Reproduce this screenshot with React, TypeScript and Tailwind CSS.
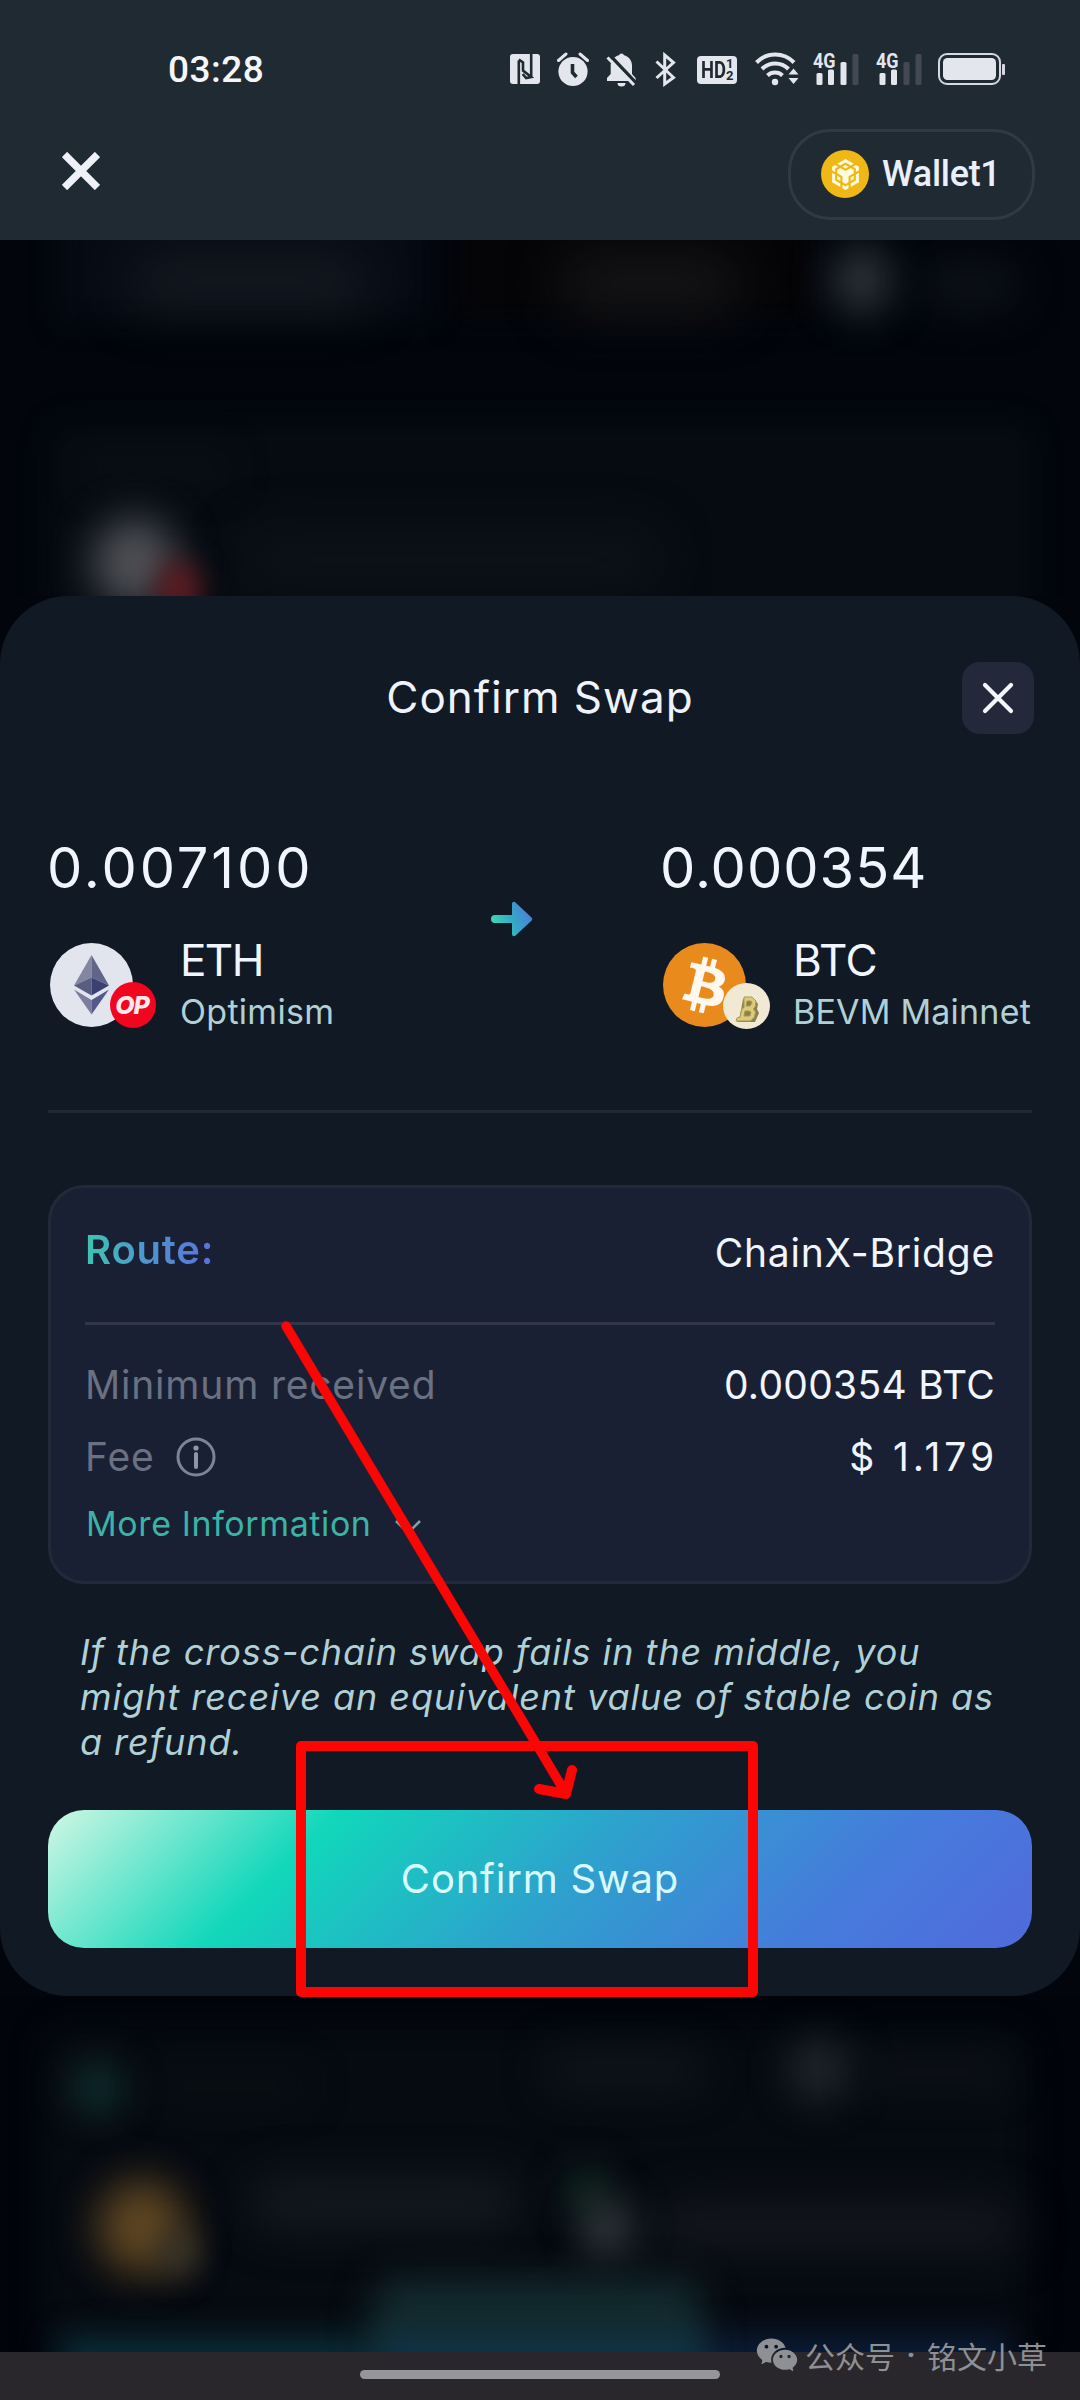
// App.tsx
import React from 'react';
import { RiWechatFill } from 'react-icons/ri';
import { SiBnbchain } from 'react-icons/si';

interface TokenSideProps {
  amount: string;
  symbol: string;
  network: string;
  icon: React.ReactNode;
  badge: React.ReactNode;
  amountClass: string;
  symbolClass: string;
  networkClass: string;
}

/* ---------- status bar ---------- */

const NfcIcon = () => (
  <svg width="30" height="36" viewBox="0 0 30 36">
    <rect y="2" width="30" height="30" rx="3" fill="#e4e6ee" />
    <path d="M8.800 32V8.500M21.200 2v22.500" fill="none" stroke="#202a32" strokeWidth="2.600" />
    <path d="M8.800 7.500 13 10.500v8l8.200 6.500-5 1-3.500-4" fill="none" stroke="#202a32" strokeWidth="2.600" />
  </svg>
);

const AlarmIcon = () => (
  <svg width="32" height="36" viewBox="0 0 32 36">
    <circle cx="16" cy="19.500" r="14.600" fill="#e4e6ee" />
    <path d="M1.500 8.500 9 2M30.500 8.500 23 2" stroke="#e4e6ee" strokeWidth="3" strokeLinecap="round" />
    <path d="M15.500 12v8.500l4 4.500" stroke="#202a32" strokeWidth="3.600" fill="none" />
  </svg>
);

const MutedBellIcon = () => (
  <svg width="31" height="36" viewBox="0 0 31 36">
    <path
      fill="#e4e6ee"
      d="M13 3.300a2.600 2.600 0 0 1 5 0c5 1.300 8 5.200 8 10.300v8.400l3.600 4v3H1v-3l3.700-4v-8.400c0-5 3.300-9 8.300-10.300ZM11.500 31h8a4 3.500 0 0 1-8 0Z"
    />
    <path d="M5 4.500 31 32" stroke="#202a32" strokeWidth="3.500" />
    <path d="M1.500 5.500 28 33" stroke="#e4e6ee" strokeWidth="3" />
  </svg>
);

const BluetoothIcon = () => (
  <svg width="21" height="36" viewBox="0 0 21 36" fill="none" stroke="#e4e6ee" strokeWidth="3">
    <path d="M1.500 9.500 18.500 25.500 9.700 32V3l8.800 7.500L1.500 26" />
  </svg>
);

const HdIcon = () => (
  <div className="flex h-7 w-10 items-center rounded bg-[#e4e6ee] pl-1 font-['Roboto',sans-serif] font-bold text-[#202a32]">
    <span className="w-[25px] origin-left scale-x-[0.8] text-[23px] leading-none">HD</span>
    <div className="-mt-px text-[13px] leading-[12px]">
      <div>1</div>
      <div>2</div>
    </div>
  </div>
);

const WifiIcon = () => (
  <svg width="44" height="36" viewBox="0 0 44 36" fill="none" stroke="#e4e6ee" strokeWidth="4">
    <path d="M1.500 10.500a26 26 0 0 1 37.500 0" />
    <path d="M7 17a18.500 18.500 0 0 1 26.500 0" />
    <path d="M12.500 23.500a11 11 0 0 1 15 0" />
    <circle cx="20" cy="30" r="3.200" fill="#e4e6ee" stroke="none" />
    <path d="m33.500 22.500 5-6 5 6ZM33.500 26l5 6 5-6Z" fill="#e4e6ee" stroke="none" />
  </svg>
);

const SignalIcon = ({ level }: { level: number }) => {
  const bars = [
    { x: 3.5, y: 21, h: 12 },
    { x: 15, y: 17.5, h: 15.5 },
    { x: 27.5, y: 10, h: 23 },
    { x: 39.5, y: 2, h: 31 },
  ];
  return (
    <svg width="46" height="36" viewBox="0 0 46 36" className="overflow-visible">
      {bars.map((bar, i) => (
        <rect key={bar.x} x={bar.x} y={bar.y} width="6" height={bar.h} rx="1.500" fill={i < level ? '#e4e6ee' : '#434853'} />
      ))}
      <text x="0" y="15.500" fontSize="21" fontWeight="700" textLength="22.500" lengthAdjust="spacingAndGlyphs" fill="#e4e6ee" className="font-['Roboto',sans-serif]">
        4G
      </text>
    </svg>
  );
};

const BatteryIcon = () => (
  <svg width="67" height="36" viewBox="0 0 67 36">
    <rect x="1" y="2" width="61" height="30" rx="8" fill="none" stroke="#d5d8e2" strokeWidth="2" />
    <rect x="5" y="6" width="53" height="22" rx="4.500" fill="#e4e6ee" />
    <rect x="64" y="12" width="3" height="11" rx="1" fill="#d5d8e2" />
  </svg>
);

const StatusBar = () => (
  <div className="flex h-[138px] items-center pl-[168px]">
    <span className="w-[342px] font-['Roboto',sans-serif] text-[37px] leading-none font-medium tracking-[0.5px] text-[#f4f6fa]">
      03:28
    </span>
    <div className="flex items-center pt-0.5">
      <NfcIcon />
      <div className="ml-[17px]"><AlarmIcon /></div>
      <div className="ml-[17px]"><MutedBellIcon /></div>
      <div className="ml-[18px]"><BluetoothIcon /></div>
      <div className="ml-[21px]"><HdIcon /></div>
      <div className="ml-[18px]"><WifiIcon /></div>
      <div className="ml-[14px]"><SignalIcon level={3} /></div>
      <div className="ml-[17px]"><SignalIcon level={2} /></div>
      <div className="ml-[16px]"><BatteryIcon /></div>
    </div>
  </div>
);

/* ---------- wallet header ---------- */

const WalletHeader = () => (
  <div className="flex h-[72px] items-center justify-between pr-[45px] pl-[62px]">
    <svg width="38" height="38" viewBox="0 0 38 38" className="-mt-1.5" stroke="#eef1f8" strokeWidth="7.500">
      <path d="M2.500 2.500 35.500 35.500M35.500 2.500 2.500 35.500" />
    </svg>
    <div className="flex h-[91px] w-[247px] shrink-0 items-center rounded-[42px] border-[3px] border-[#313a42] pl-[30px]">
      <div className="flex h-12 w-12 items-center justify-center rounded-full bg-[#efb816]">
        <SiBnbchain size={31} color="#fffbe0" />
      </div>
      <span className="ml-[13px] font-['Roboto',sans-serif] text-[36px] leading-none font-medium tracking-[-0.3px] text-[#e9effb]">
        Wallet1
      </span>
    </div>
  </div>
);

/* ---------- dimmed page behind the sheet ---------- */

const BackdropTop = () => (
  <div className="relative h-[356px] overflow-hidden bg-[#02050c]">
    <div className="absolute top-[180px] left-[45px] h-[240px] w-[990px] rounded-[30px] bg-[#060b12] blur-[12px]" />
    <div className="absolute -top-10 left-[60px] h-[120px] w-[370px] bg-[#070b14] blur-[14px]" />
    <div className="absolute top-4 left-[130px] h-[50px] w-[240px] rounded-full bg-[#161a21] blur-[26px]" />
    <div className="absolute -top-10 left-[455px] h-[120px] w-[360px] bg-[#050507] blur-[14px]" />
    <div className="absolute top-4 left-[560px] h-[55px] w-[180px] rounded-full bg-[#161618] blur-[26px]" />
    <div className="absolute top-[6px] left-[830px] h-[68px] w-[64px] rounded-full bg-[#2a3138] blur-[19px]" />
    <div className="absolute top-[20px] left-[920px] h-[50px] w-[100px] rounded-full bg-[#0d1117] blur-[20px]" />
    <div className="absolute top-[215px] left-[80px] h-[30px] w-[150px] rounded-full bg-[#0a0e15] blur-[18px]" />
    <div className="absolute top-[290px] left-[240px] h-[60px] w-[420px] rounded-full bg-[#0e1218] blur-[24px]" />
    <div className="absolute top-[278px] left-[93px] h-[90px] w-[84px] rounded-full bg-[#505156] blur-[20px]" />
    <div className="absolute top-[322px] left-[158px] h-[56px] w-[42px] rounded-full bg-[#611b21] blur-[14px]" />
  </div>
);

const BackdropBottom = () => (
  <div className="relative h-[356px] overflow-hidden bg-[#02040c]">
    <div className="absolute top-[30px] left-[40px] h-[340px] w-[990px] rounded-[30px] bg-[#060a11] blur-[14px]" />
    <div className="absolute top-[340px] left-[60px] h-[50px] w-[400px] bg-[#0a2d37] blur-[16px]" />
    <div className="absolute top-[340px] left-[440px] h-[50px] w-[570px] bg-[#0c1d38] blur-[16px]" />
    <div className="absolute top-[64px] left-[70px] h-[56px] w-[56px] rounded-full bg-[#0f2c2c] blur-[18px]" />
    <div className="absolute top-[75px] left-[150px] h-[30px] w-[160px] rounded-full bg-[#0a0f13] blur-[18px]" />
    <div className="absolute top-[55px] left-[545px] h-[40px] w-[160px] rounded-full bg-[#10151b] blur-[20px]" />
    <div className="absolute top-[43px] left-[788px] h-[62px] w-[64px] rounded-full bg-[#21262c] blur-[19px]" />
    <div className="absolute top-[60px] left-[860px] h-[34px] w-[150px] rounded-full bg-[#0d1116] blur-[18px]" />
    <div className="absolute top-[182px] left-[250px] h-[50px] w-[270px] rounded-full bg-[#161a20] blur-[23px]" />
    <div className="absolute top-[205px] left-[650px] h-[50px] w-[370px] rounded-full bg-[#14171c] blur-[23px]" />
    <div className="absolute top-[184px] left-[98px] h-[94px] w-[88px] rounded-full bg-[#604722] blur-[21px]" />
    <div className="absolute top-[234px] left-[158px] h-[46px] w-[40px] rounded-full bg-[#3a3529] blur-[15px]" />
    <div className="absolute top-[170px] left-[565px] h-[50px] w-[44px] rounded-full bg-[#11281f] blur-[18px]" />
    <div className="absolute top-[204px] left-[583px] h-[58px] w-[48px] rounded-full bg-[#343b3e] blur-[19px]" />
    <div className="absolute top-[282px] left-[370px] h-[100px] w-[335px] rounded-[30px] bg-[#132a2e] blur-[18px]" />
    <div className="absolute top-[338px] left-[380px] h-[40px] w-[320px] bg-[#103245] blur-[14px]" />
  </div>
);

/* ---------- tokens ---------- */

const EthIcon = () => (
  <svg width="83" height="84" viewBox="0 0 83 84">
    <ellipse cx="41.500" cy="42" rx="41.500" ry="42" fill="#e3e5ee" />
    <path fill="#8386a0" d="M41.500 12 24 42.500l17.500-8Z" />
    <path fill="#62658a" d="M41.500 12 59 42.500l-17.500-8Z" />
    <path fill="#5a5d82" d="m24 42.500 17.500-8v18Z" />
    <path fill="#3c4070" d="m59 42.500-17.500-8v18Z" />
    <path fill="#7b7e9c" d="M24 46.500 41.500 57v14.500Z" />
    <path fill="#55598a" d="M59 46.500 41.500 57v14.500Z" />
  </svg>
);

const OptimismBadge = () => (
  <div className="absolute top-[39px] left-[60px] flex h-[46px] w-[46px] items-center justify-center rounded-full bg-[#f2061f] pr-0.5 font-['Inter',sans-serif] text-[25px] leading-none font-extrabold tracking-[-1px] text-[#ffe9ea] italic">
    OP
  </div>
);

const BtcIcon = () => (
  <svg width="83" height="84" viewBox="0 0 83 84">
    <ellipse cx="41.500" cy="42" rx="41.500" ry="42" fill="#e98a1c" />
    <path
      fill="#fff8ee"
      transform="matrix(2.85 0 0 2.85 -4.2 -3.6)"
      d="M23.189 14.02c.314-2.096-1.283-3.223-3.465-3.975l.708-2.84-1.728-.43-.69 2.765c-.454-.114-.92-.22-1.385-.326l.695-2.783L15.596 6l-.708 2.839c-.376-.086-.746-.17-1.104-.26l.002-.009-2.384-.595-.46 1.846s1.283.294 1.256.312c.7.175.826.638.805 1.006l-.806 3.235c.048.012.11.03.18.057l-.183-.045-1.13 4.532c-.086.212-.303.531-.793.41.018.025-1.256-.313-1.256-.313l-.858 1.978 2.25.561c.418.105.828.215 1.231.318l-.715 2.872 1.727.43.708-2.84c.472.127.93.245 1.378.357l-.706 2.828 1.728.43.715-2.866c2.948.558 5.164.333 6.097-2.333.752-2.146-.037-3.385-1.588-4.192 1.13-.26 1.98-1.003 2.207-2.538zm-3.95 5.538c-.533 2.147-4.148.986-5.32.695l.95-3.805c1.172.293 4.929.872 4.37 3.11zm.535-5.569c-.487 1.953-3.495.96-4.47.717l.86-3.45c.975.243 4.118.696 3.61 2.733z"
    />
  </svg>
);

const BevmBadge = () => (
  <div className="absolute top-[40px] left-[60px]">
    <svg width="47" height="46" viewBox="0 0 47 46">
      <ellipse cx="23.500" cy="23" rx="23.500" ry="23" fill="#f1e9d3" />
      <path fill="#8d7f4a" d="M20 16h11l4 5-1 5 2 4-4 9H15l-2-2 4-4Z" />
      <path
        fill="#dccb78"
        stroke="#a89858"
        strokeWidth="1"
        fillRule="evenodd"
        d="M21 14h8l4 4-.5 5-2 3 2 3-1 5-4 4H13l1-3 3-1 2-9h2Zm3 4-1 5h4l2-3-1-2Zm-2 10-1 5h6l1-4-2-1Z"
      />
    </svg>
  </div>
);

const TokenSide: React.FC<TokenSideProps> = ({
  amount,
  symbol,
  network,
  icon,
  badge,
  amountClass,
  symbolClass,
  networkClass,
}) => (
  <div className="whitespace-nowrap">
    <div className={`text-[56px] leading-[60px] font-normal text-[#f1f5fd] ${amountClass}`}>{amount}</div>
    <div className="mt-10 flex items-center">
      <div className="relative shrink-0">
        {icon}
        {badge}
      </div>
      <div className="ml-[47px]">
        <div className={`text-[44px] leading-[44px] text-[#f1f5fd] ${symbolClass}`}>{symbol}</div>
        <div className={`mt-[10px] text-[34px] leading-[40px] text-[#b0d0d6] ${networkClass}`}>{network}</div>
      </div>
    </div>
  </div>
);

const SwapArrow = () => (
  <svg width="42" height="36" viewBox="0 0 42 36">
    <defs>
      <linearGradient id="swapArrow" x1="0" y1="0.7" x2="1" y2="0.3">
        <stop offset="0" stopColor="#3be0b4" />
        <stop offset="0.5" stopColor="#35a9c4" />
        <stop offset="1" stopColor="#4a7be0" />
      </linearGradient>
    </defs>
    <path
      fill="url(#swapArrow)"
      d="M4 14h17V3c0-2 2-3 3.500-1.500L40.500 16.500c1 1 1 2.200 0 3.200L24.500 34.500C23 36 21 35 21 33V22H4a4 4 0 0 1 0-8Z"
    />
  </svg>
);

/* ---------- route card ---------- */

const RouteCard = () => (
  <div className="mt-[72px] h-[399px] rounded-[36px] border-[3px] border-[#222a3a] bg-[#1a2033] px-[34px] pt-[33px]">
    <div className="flex h-[60px] items-center justify-between">
      <span className="relative -top-px bg-linear-to-r from-[#3ec3b0] via-[#4f93cf] via-50% to-[#5a70dc] bg-clip-text text-[40px] leading-[60px] font-semibold tracking-[0.8px] text-transparent">
        Route:
      </span>
      <span className="pt-1 text-[39px] leading-[56px] tracking-[0.8px] text-[#f1f5fd]">ChainX-Bridge</span>
    </div>
    <div className="mt-[41px] h-[3px] bg-[#303647]" />
    <div className="mt-[30px] flex h-[60px] items-center justify-between text-[39px] leading-[60px]">
      <span className="tracking-[0.8px] text-[#6a7182]">Minimum received</span>
      <span className="tracking-[0.3px] text-[#f1f5fd]">0.000354 BTC</span>
    </div>
    <div className="mt-3 flex h-[60px] items-center justify-between text-[39px] leading-[60px]">
      <span className="flex items-center tracking-[0.9px] text-[#6a7182]">
        Fee
        <svg width="40" height="40" viewBox="0 0 40 40" className="ml-[21px]">
          <circle cx="20" cy="20" r="18" fill="none" stroke="#7d8494" strokeWidth="3" />
          <circle cx="20" cy="11" r="2.600" fill="#8f96a6" />
          <path d="M20 17v13" stroke="#8f96a6" strokeWidth="4" strokeLinecap="round" />
        </svg>
      </span>
      <span className="-mr-[3px] text-[39px] tracking-[3.9px] text-[#f1f5fd]">$ 1.179</span>
    </div>
    <div className="mt-[15px] flex h-[44px] items-center text-[34px] leading-[44px] text-[#3bb3a5]">
      <span className="pl-px tracking-[0.6px]">More Information</span>
      <svg width="28" height="18" viewBox="0 0 28 18" className="ml-[22px] mt-1.5">
        <path d="M2 3 14 15 26 3" fill="none" stroke="#7fa3a9" strokeWidth="2.500" />
      </svg>
    </div>
  </div>
);

/* ---------- sheet ---------- */

const ConfirmSheet = () => (
  <div className="h-[1400px] rounded-[68px] bg-[#111925] px-12 pt-[66px] font-['Inter',sans-serif]">
    <div className="grid h-[72px] grid-cols-[72px_1fr_72px] items-center">
      <div />
      <h1 className="pb-0.5 text-center text-[44px] leading-[70px] tracking-[1px] text-[#eef2fa]">Confirm Swap</h1>
      <button className="ml-0.5 flex h-[72px] w-[72px] items-center justify-center rounded-[18px] bg-[#23293a]">
        <svg width="32" height="32" viewBox="0 0 32 32" stroke="#f4f6fb" strokeWidth="4.200" strokeLinecap="round">
          <path d="M3 3 29 29M29 3 3 29" />
        </svg>
      </button>
    </div>

    <div className="mt-[104px] flex items-start pl-0.5">
      <div className="w-[441px]">
        <TokenSide
          amount="0.007100"
          symbol="ETH"
          network="Optimism"
          icon={<EthIcon />}
          badge={<OptimismBadge />}
          amountClass="-ml-[3px] tracking-[2.9px]"
          symbolClass="tracking-[-1.6px]"
          networkClass="tracking-[0.3px]"
        />
      </div>
      <div className="mt-[63px] w-[42px]">
        <SwapArrow />
      </div>
      <div className="ml-[130px]">
        <TokenSide
          amount="0.000354"
          symbol="BTC"
          network="BEVM Mainnet"
          icon={<BtcIcon />}
          badge={<BevmBadge />}
          amountClass="-ml-[3px] tracking-[1px]"
          symbolClass="tracking-[-0.4px]"
          networkClass="tracking-[0.2px]"
        />
      </div>
    </div>

    <div className="mt-[78px] h-[3px] bg-[#202a36]" />

    <RouteCard />

    <p className="mt-[46px] pl-[32px] text-[36px] leading-[45px] tracking-[0.95px] whitespace-nowrap text-[#b0d0d6] italic">
      If the cross-chain swap fails in the middle, you
      <br />
      might receive an equivalent value of stable coin as
      <br />
      a refund.
    </p>

    <button className="mt-[45px] flex h-[138px] w-full items-center justify-center rounded-[36px] bg-[linear-gradient(135deg,#d0f7e4_0%,#11d7ba_26%,#2f9fce_54%,#457cdb_78%,#516adb_100%)] text-[40px] leading-none tracking-[0.8px] text-[#d9fbff]">
      Confirm Swap
    </button>
  </div>
);

/* ---------- hand-drawn marks over the page ---------- */

const Annotations = () => (
  <>
    <div className="absolute top-[1741px] left-[296px] h-[256px] w-[462px] rounded-[5px] border-[10px] border-[#fb0505]" />
    <svg width="310" height="500" viewBox="0 0 310 500" className="absolute top-[1310px] left-[275px]" fill="none" stroke="#fb0505" strokeLinecap="round" strokeLinejoin="round">
      <path d="M11 16 290 482" strokeWidth="9.500" />
      <path d="M264 479 291 484 297 460" strokeWidth="10" />
    </svg>
  </>
);

const Watermark = () => (
  <div className="absolute top-[2332px] left-[755px] flex h-[46px] items-center text-[#8f9094]">
    <RiWechatFill size={44} />
    <div className="ml-[6px] flex font-['Noto_Sans_CJK_SC',sans-serif] text-[30px] leading-none">
      <span>公众号</span>
      <span className="w-[32px] text-center font-['Roboto',sans-serif] font-bold">·</span>
      <span>铭文小草</span>
    </div>
  </div>
);

const App: React.FC = () => (
  <div className="relative h-[2400px] w-[1080px] overflow-hidden bg-[#02050c]">
    <header className="h-[240px] bg-[#202a32]">
      <StatusBar />
      <WalletHeader />
    </header>
    <BackdropTop />
    <ConfirmSheet />
    <BackdropBottom />
    <div className="flex h-12 justify-center bg-[#29272b] pt-[18px]">
      <div className="h-[9px] w-[360px] rounded-full bg-[#969599]" />
    </div>
    <Annotations />
    <Watermark />
  </div>
);

export default App;
